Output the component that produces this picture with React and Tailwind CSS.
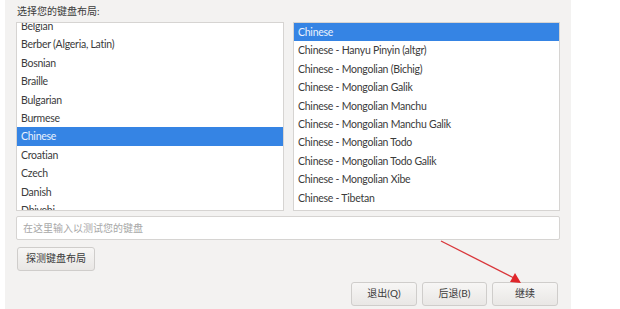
import React from "react";

const left = ["Belgian","Berber (Algeria, Latin)","Bosnian","Braille","Bulgarian","Burmese","Chinese","Croatian","Czech","Danish","Dhivehi"];
const right = ["Chinese","Chinese - Hanyu Pinyin (altgr)","Chinese - Mongolian (Bichig)","Chinese - Mongolian Galik","Chinese - Mongolian Manchu","Chinese - Mongolian Manchu Galik","Chinese - Mongolian Todo","Chinese - Mongolian Todo Galik","Chinese - Mongolian Xibe","Chinese - Tibetan"];

const font = { fontFamily: '"Lato", "Noto Sans CJK SC", sans-serif' };

function Row({ text, sel }) {
  return (
    <div className={"h-[18.4px] leading-[18.4px] px-[4px] text-[10.5px] tracking-[-0.25px] whitespace-nowrap " + (sel ? "bg-[#3584e4] text-[#eaf2fd]" : "text-[#3b3b3b]")}>{text}</div>
  );
}

export default function App() {
  return (
    <div className="w-[620px] h-[309px] bg-white relative overflow-hidden" style={font}>
      <div className="ml-[5px] w-[566px] h-[309px] bg-[#f3f2f1] pl-[11px] pr-[11px] flex flex-col">
        <div className="h-[22px] pt-[4px] text-[10px] text-[#3b3b3b] leading-[14px] pl-[1px]">选择您的键盘布局:</div>
        <div className="flex gap-[9px] h-[189px]">
          <div className="w-[268px] bg-white border border-[#d6d4d2] overflow-hidden">
            <div className="mt-[-6px]">
              {left.map((t) => <Row key={t} text={t} sel={t === "Chinese"} />)}
            </div>
          </div>
          <div className="w-[267px] bg-white border border-[#d6d4d2] overflow-hidden">
            {right.map((t, i) => <Row key={t} text={t} sel={i === 0} />)}
          </div>
        </div>
        <div className="mt-[5px] h-[24px] w-[544px] bg-white border border-[#d6d4d2] rounded-[2px] flex items-center px-[6px] text-[10px] text-[#a8a8a8]">在这里输入以测试您的键盘</div>
        <div className="mt-[4px]">
          <div className="inline-flex items-center justify-center w-[78px] h-[24px] ml-[1px] border border-[#cfcdcb] rounded-[3px] bg-gradient-to-b from-[#f7f6f5] to-[#e9e7e5] text-[10px] text-[#3b3b3b]">探测键盘布局</div>
        </div>
        <div className="mt-[11px] flex justify-end gap-[5px] pr-[2px]">
          <div className="flex items-center justify-center w-[66px] h-[24px] border border-[#cfcdcb] rounded-[3px] bg-gradient-to-b from-[#f7f6f5] to-[#e9e7e5] text-[10px] text-[#3b3b3b]">退出(Q)</div>
          <div className="flex items-center justify-center w-[65px] h-[24px] border border-[#cfcdcb] rounded-[3px] bg-gradient-to-b from-[#f7f6f5] to-[#e9e7e5] text-[10px] text-[#3b3b3b]">后退(B)</div>
          <div className="flex items-center justify-center w-[66px] h-[24px] border border-[#cfcdcb] rounded-[3px] bg-gradient-to-b from-[#f7f6f5] to-[#e9e7e5] text-[10px] text-[#3b3b3b]">继续</div>
        </div>
      </div>
      <svg className="absolute left-0 top-0" width="620" height="309" viewBox="0 0 620 309">
        <line x1="441" y1="241" x2="514" y2="278" stroke="#d9363a" strokeWidth="1.3" />
        <polygon points="521,283 510,282 515,273" fill="#e0262b" />
      </svg>
    </div>
  );
}
